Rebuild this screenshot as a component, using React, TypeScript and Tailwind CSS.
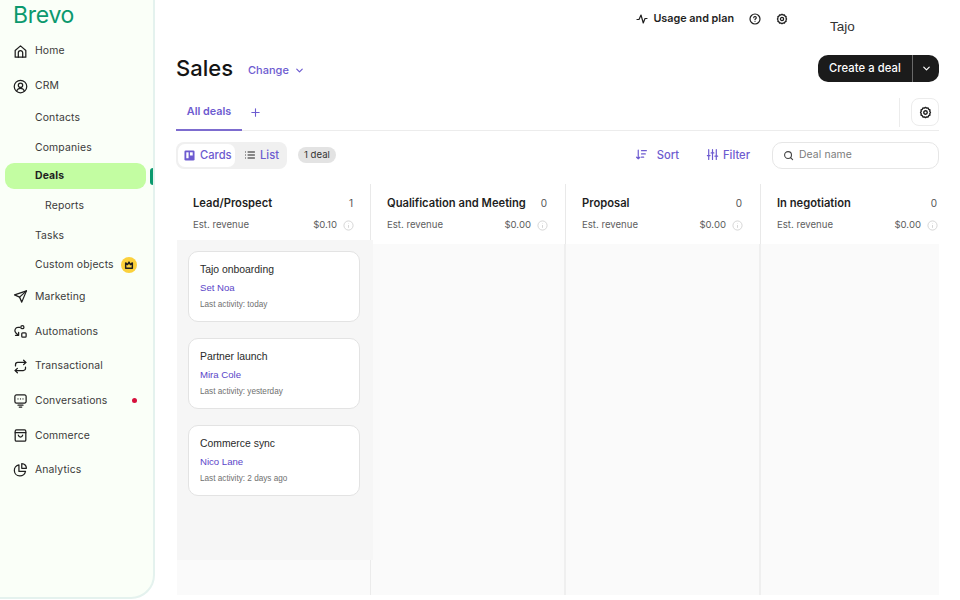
import React from "react";

const FONT = "font-['Inter','Liberation_Sans',sans-serif]";

function Ic({ children, size = 16, sw = 2, className = "" }: { children: React.ReactNode; size?: number; sw?: number; className?: string }) {
  return (
    <svg width={size} height={size} viewBox="0 0 24 24" fill="none" stroke="currentColor" strokeWidth={sw} strokeLinecap="round" strokeLinejoin="round" className={`shrink-0 ${className}`}>
      {children}
    </svg>
  );
}

const Gear = ({ size = 14, className = "" }: { size?: number; className?: string }) => (
  <Ic size={size} sw={2.6} className={className}>
    <path d="M12 2.500l2.200 1.500 2.600-.2 1.100 2.300 2.300 1.200-.3 2.600L21.200 12l-1.300 2.100.3 2.600-2.300 1.200-1.100 2.300-2.600-.2L12 21.500 9.800 20l-2.600.2-1.100-2.300-2.300-1.200.3-2.600L2.800 12l1.300-2.100-.3-2.600 2.300-1.200 1.100-2.300 2.600.2z" />
    <circle cx="12" cy="12" r="3.200" />
  </Ic>
);

const icons: Record<string, React.ReactNode> = {
  home: (
    <>
      <path d="M3.500 21V10.500L12 3l8.500 7.500V21z" />
      <path d="M8.500 21v-7a3.500 3.500 0 0 1 7 0v7" />
    </>
  ),
  crm: (
    <>
      <circle cx="12" cy="12" r="10" />
      <circle cx="12" cy="10" r="3.500" />
      <path d="M6 19c1-3 3.500-4 6-4s5 1 6 4" />
    </>
  ),
  marketing: (
    <>
      <path d="M21.500 3L2.500 9.500l8 3.500 3.500 8z" />
      <path d="M21.500 3L10.500 13" />
    </>
  ),
  automations: (
    <>
      <circle cx="15" cy="5" r="2.500" />
      <rect x="14" y="14" width="7" height="7" rx="1.500" />
      <path d="M11 5.500H8a5 5 0 0 0-4 8l4 4" />
      <path d="M4 18h5v-4.500" />
    </>
  ),
  transactional: (
    <>
      <path d="M17 2l3.500 3.500L17 9" />
      <path d="M4 11V9a3.500 3.500 0 0 1 3.500-3.500h13" />
      <path d="M7 22l-3.500-3.500L7 15" />
      <path d="M20 13v2a3.500 3.500 0 0 1-3.500 3.500h-13" />
    </>
  ),
  conversations: (
    <>
      <path d="M3 5.500A2.500 2.500 0 0 1 5.500 3h13A2.500 2.500 0 0 1 21 5.500v8a2.500 2.500 0 0 1-2.500 2.500H5.500A2.500 2.500 0 0 1 3 13.500z" />
      <path d="M8 9.500h.01M12 9.500h.01M16 9.500h.01" />
      <path d="M8 19.500h8M10 22.500h4" />
    </>
  ),
  commerce: (
    <>
      <rect x="3.500" y="3" width="17" height="18" rx="2" />
      <path d="M3.500 7.500h17" />
      <path d="M8.500 11.500c.5 2 2 3 3.500 3s3-1 3.500-3" />
    </>
  ),
  analytics: (
    <>
      <path d="M9.500 4.500a9 9 0 1 0 10.500 10.500H9.500z" />
      <path d="M14 2.500a8 8 0 0 1 7.500 7.500H14z" />
    </>
  ),
};

function MainItem({ icon, label, dot }: { icon: string; label: string; dot?: boolean }) {
  return (
    <div className="flex items-center h-[26px] pl-[13px] pr-[15px] text-[10.400px] tracking-[0.15px] text-[#3a3a3a]">
      <Ic size={15} className="text-[#1f1f1f] mr-[7px]">{icons[icon]}</Ic>
      <span>{label}</span>
      {dot && <span className="ml-auto mr-[1px] w-[5px] h-[5px] rounded-full bg-[#d6113c]" />}
    </div>
  );
}

function SubItem({ label, indent = false, children }: { label: string; indent?: boolean; children?: React.ReactNode }) {
  return (
    <div className={`flex items-center h-[26px] ${indent ? "pl-[45px]" : "pl-[35px]"} text-[10.400px] tracking-[0.15px] text-[#3a3a3a]`}>
      <span>{label}</span>
      {children}
    </div>
  );
}

function Sidebar() {
  return (
    <aside className="w-[155px] h-[599px] shrink-0 bg-[#fafff8] border-r-2 border-b-2 border-[#e4f2ee] rounded-br-[24px] relative">
      <div className="h-[38px] pl-[13px] text-[23px] leading-[30px] text-[#0b996e] tracking-[-0.3px] font-normal">Brevo</div>
      <div className="flex flex-col">
        <div className="mb-[9px]"><MainItem icon="home" label="Home" /></div>
        <div className="mb-[6px]"><MainItem icon="crm" label="CRM" /></div>
        <div className="flex flex-col gap-[3.400px]">
          <SubItem label="Contacts" />
          <SubItem label="Companies" />
          <div className="mx-[5px] -mt-[1px] mb-[1px] w-[141px] h-[26px] rounded-[9px] bg-[#c3fda2] flex items-center pl-[30px] text-[10.400px] tracking-[0.15px] font-bold text-[#1f1f1f]">Deals</div>
          <SubItem label="Reports" indent />
          <SubItem label="Tasks" />
          <SubItem label="Custom objects">
            <span className="ml-[7px] w-[16px] h-[16px] rounded-full bg-[#fbd13c] flex items-center justify-center">
              <svg width="10" height="10" viewBox="0 0 24 24" fill="none" stroke="#1f1f1f" strokeWidth="3.500" strokeLinejoin="round"><path d="M4 7l4.500 4L12 5l3.500 6L20 7v13H4z" /></svg>
            </span>
          </SubItem>
        </div>
        <div className="mt-[6px] flex flex-col gap-[8.600px]">
          <MainItem icon="marketing" label="Marketing" />
          <MainItem icon="automations" label="Automations" />
          <MainItem icon="transactional" label="Transactional" />
          <MainItem icon="conversations" label="Conversations" dot />
          <MainItem icon="commerce" label="Commerce" />
          <MainItem icon="analytics" label="Analytics" />
        </div>
      </div>
      <span className="absolute left-[150px] top-[168px] w-[3px] h-[17px] rounded-l-[3px] bg-[#0b996e]" />
    </aside>
  );
}

function Info() {
  return (
    <svg width="11" height="11" viewBox="0 0 24 24" fill="none" stroke="#d2d2d2" strokeWidth="2" className="shrink-0 ml-[6px]">
      <circle cx="12" cy="12" r="10" />
      <path d="M12 11v6M12 7v1" />
    </svg>
  );
}

function ColHead({ title, count, rev, first }: { title: string; count: string; rev: string; first?: boolean }) {
  return (
    <div className={`shrink-0 h-[60px] pt-[12px] ${first ? "w-[194px] pl-[17px] pr-[16px]" : "w-[195px] pl-[16px] pr-[17px] border-l border-[#e9e9e9]"}`}>
      <div className="flex justify-between items-center h-[15px]">
        <span className="text-[11.200px] font-semibold text-[#1f1f1f] whitespace-nowrap">{title}</span>
        <span className="text-[10px] mr-[1px] text-[#555]">{count}</span>
      </div>
      <div className="flex items-center h-[15px] mt-[7px] text-[9.600px] text-[#5e5e5e]">
        <span>Est. revenue</span>
        <span className="ml-auto">{rev}</span>
        <Info />
      </div>
    </div>
  );
}

function Card({ title, owner, activity }: { title: string; owner: string; activity: string }) {
  return (
    <div className="h-[71px] rounded-[10px] bg-white border border-[#e3e3e3] pl-[11px] pt-[10px] font-['Liberation_Sans',sans-serif]">
      <div className="text-[10.400px] leading-[15px] text-[#2a2a2a]">{title}</div>
      <div className="text-[9.600px] leading-[14px] mt-[4px] text-[#5a45c9]">{owner}</div>
      <div className="text-[8.200px] leading-[12px] mt-[4px] text-[#707070]">{activity}</div>
    </div>
  );
}

export default function App() {
  return (
    <div className={`w-[960px] h-[600px] overflow-hidden bg-white flex ${FONT}`}>
      <Sidebar />
      <main className="flex-1 min-w-0 pl-[21px] pr-[21px] flex flex-col">
        <div className="h-[37px] flex items-start justify-end relative">
          <div className="flex items-center h-[15px] mt-[11px] mr-[151px]">
            <Ic size={12} sw={2.4} className="text-[#1f1f1f]"><path d="M2 13h4l4-9 4.500 16L18 11h4" /></Ic>
            <span className="ml-[5px] pt-[1px] text-[10.800px] font-semibold text-[#1f1f1f]">Usage and plan</span>
            <Ic size={12} sw={2.4} className="ml-[15px] text-[#1f1f1f]">
              <circle cx="12" cy="12" r="10" />
              <path d="M9.500 9.500a2.500 2.500 0 1 1 3.500 2.300c-.7.400-1 .9-1 1.700M12 17v.01" />
            </Ic>
            <Gear size={12} className="ml-[15px] text-[#1f1f1f]" />
          </div>
          <span className="absolute left-[654px] top-[18px] font-['Liberation_Sans',sans-serif] text-[13.500px] leading-[17px] text-[#333]">Tajo</span>
        </div>
        <div className="flex items-center h-[44px] mt-[9px]">
          <h1 className="text-[22px] leading-[28px] font-medium text-[#141414]">Sales</h1>
          <span className="ml-[15px] mt-[4px] text-[11px] font-medium text-[#6d5bd0]">Change</span>
          <Ic size={11} sw={2.6} className="ml-[5px] mt-[4px] text-[#6d5bd0]"><path d="M6 9l6 6 6-6" /></Ic>
          <div className="ml-auto h-[27px] rounded-[10px] bg-[#1b1b1b] text-white flex items-center text-[11.200px] font-medium">
            <span className="px-[11px] tracking-[0.1px]">Create a deal</span>
            <span className="w-[27px] h-[27px] border-l border-[#6a6a6a] flex items-center justify-center">
              <Ic size={11} sw={2.6}><path d="M6 9l6 6 6-6" /></Ic>
            </span>
          </div>
        </div>
        <div className="h-[40px] mt-[1px] flex items-stretch border-b border-[#ececec]">
          <div className="w-[66px] -mb-px border-b-2 border-[#7d6ccf] flex items-center justify-center text-[10.800px] font-semibold text-[#6d5bd0] pt-[5px]">All deals</div>
          <div className="ml-[8px] flex items-center pt-[3px] text-[#6d5bd0]">
            <Ic size={11} sw={2.4}><path d="M12 4v16M4 12h16" /></Ic>
          </div>
          <div className="ml-auto mt-[7px] mb-[3px] pr-[11px] border-r border-[#ececec]" />
          <div className="ml-[11px] mt-[7px] w-[28px] h-[28px] rounded-[8px] border border-[#ececec] flex items-center justify-center text-[#1f1f1f]">
            <Gear size={13} />
          </div>
        </div>
        <div className="flex items-center h-[48px]">
          <div className="flex items-center h-[27px] rounded-[8px] bg-[#f0f0f0] p-[2px] text-[11.200px] font-medium text-[#6d5bd0]">
            <div className="h-[23px] w-[57px] rounded-[7px] bg-white flex items-center pl-[6px]">
              <svg width="11" height="11" viewBox="0 0 24 24" className="shrink-0 mr-[5px]"><rect x="1" y="1" width="22" height="22" rx="3" fill="#6d5bd0" /><rect x="5" y="5" width="5" height="13" fill="#fff" /><rect x="13" y="5" width="6" height="7" fill="#fff" /></svg>
              Cards
            </div>
            <div className="h-[23px] flex items-center pl-[9px] pr-[6px]">
              <Ic size={12} className="text-[#1f1f1f] mr-[4px]"><path d="M8 6h13M8 12h13M8 18h13M3 6h.01M3 12h.01M3 18h.01" /></Ic>
              List
            </div>
          </div>
          <span className="ml-[11px] h-[16px] px-[6px] rounded-full bg-[#e3e3e3] flex items-center text-[9.600px] text-[#333]">1 deal</span>
          <div className="ml-auto flex items-center text-[11.200px] font-medium text-[#6d5bd0]">
            <Ic size={13} sw={2.2}><path d="M6 4v16M3 17l3 3 3-3M12 5h9M12 11h7M12 17h4" /></Ic>
            <span className="ml-[9px]">Sort</span>
            <Ic size={13} sw={2.2} className="ml-[27px]"><path d="M5 3v18M12 3v18M19 3v18M2.500 14h5M9.500 9h5M16.500 15h5" /></Ic>
            <span className="ml-[4px]">Filter</span>
          </div>
          <div className="ml-[22px] w-[167px] h-[27px] rounded-[10px] border border-[#e6e6e6] flex items-center pl-[10px] text-[10.400px] tracking-[0.1px] text-[#7b7b7b]">
            <Ic size={11} sw={2.4} className="text-[#444] mr-[5px]"><circle cx="11" cy="11" r="7.500" /><path d="M21 21l-4.500-4.500" /></Ic>
            Deal name
          </div>
        </div>
        <div className="mt-[5px] flex flex-col h-[411px] relative overflow-hidden">
          <div className="flex">
            <ColHead title="Lead/Prospect" count="1" rev="$0.10" first />
            <ColHead title="Qualification and Meeting" count="0" rev="$0.00" />
            <ColHead title="Proposal" count="0" rev="$0.00" />
            <ColHead title="In negotiation" count="0" rev="$0.00" />
          </div>
          <div className="flex flex-1 bg-[#fafafa] ml-[1px]">
            <div className="w-[194px] shrink-0 border-r border-[#ebebeb]" />
            <div className="w-[195px] shrink-0 border-r-2 border-[#efefef]" />
            <div className="w-[195px] shrink-0 border-r-2 border-[#efefef]" />
          </div>
          <div className="absolute left-[1px] top-[56px] w-[196px] h-[320px] bg-[#f6f6f6] pl-[11px] pr-[13px] pt-[11px] flex flex-col gap-[16px]">
            <Card title="Tajo onboarding" owner="Set Noa" activity="Last activity: today" />
            <Card title="Partner launch" owner="Mira Cole" activity="Last activity: yesterday" />
            <Card title="Commerce sync" owner="Nico Lane" activity="Last activity: 2 days ago" />
          </div>
        </div>
      </main>
    </div>
  );
}
